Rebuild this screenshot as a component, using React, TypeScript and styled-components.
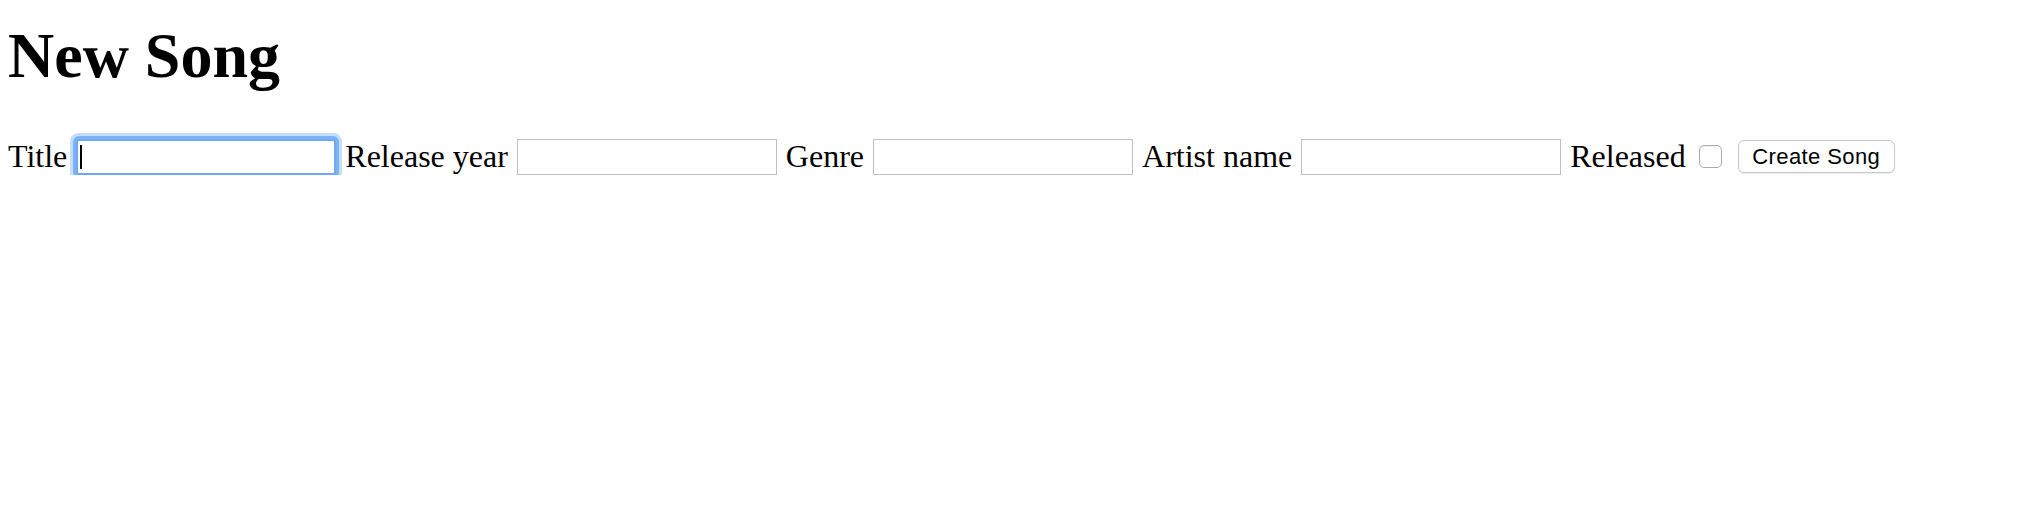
import styled, { createGlobalStyle } from "styled-components";

const GlobalStyle = createGlobalStyle`
  body {
    margin: 0;
    background: #fff;
    color: #000;
    font-family: "Liberation Serif", "Times New Roman", serif;
  }
`;

const fields = ["Title", "Release year", "Genre", "Artist name"];

function App() {
  return (
    <Page>
      <GlobalStyle />
      <Heading>New Song</Heading>
      <Form onSubmit={(e) => e.preventDefault()}>
        {fields.map((name, i) => (
          <Field key={name}>
            <Label htmlFor={`song-${i}`}>{name}</Label>
            <InputWrap>
              <TextInput id={`song-${i}`} type="text" $focused={i === 0} />
              {i === 0 && <Caret />}
            </InputWrap>
          </Field>
        ))}
        <Label htmlFor="song-released">Released</Label>
        <Checkbox id="song-released" type="checkbox" />
        <SubmitButton type="submit">Create Song</SubmitButton>
      </Form>
    </Page>
  );
}

export default App;

const Page = styled.div`
  padding: 19px 8px 0;
`;

const Heading = styled.h1`
  margin: 0 0 45px;
  font-size: 64px;
  font-weight: 700;
  line-height: normal;
`;

const Form = styled.form`
  display: flex;
  align-items: center;
  gap: 8px;
`;

const Field = styled.div`
  display: flex;
  align-items: center;
  gap: 8px;
`;

const Label = styled.label`
  font-size: 32px;
  line-height: normal;
  white-space: nowrap;
`;

const InputWrap = styled.div`
  position: relative;
  display: flex;
  margin: 0 1px;
`;

const TextInput = styled.input<{ $focused?: boolean }>`
  box-sizing: border-box;
  width: 260px;
  height: 36px;
  margin: 0;
  padding: 0 4px;
  background: #fff;
  border: 1px solid #c0c0c0;
  border-radius: 0;
  font-size: 26px;
  outline: none;

  ${({ $focused }) =>
    $focused &&
    `
    border: 2px solid #6fa8f5;
    border-radius: 3px;
    box-shadow: 0 0 0 3px #7db2f6, 0 0 0 6px #c6ddfb;
  `}
`;

const Caret = styled.span`
  position: absolute;
  left: 4px;
  top: 6px;
  width: 2px;
  height: 24px;
  background: #000;
`;

const Checkbox = styled.input`
  appearance: none;
  box-sizing: border-box;
  width: 23px;
  height: 23px;
  margin: 0 8px 0 5px;
  background: #fff;
  border: 1px solid #ababab;
  border-radius: 5px;
  box-shadow: inset 0 1px 1px rgba(0, 0, 0, 0.06);
`;

const SubmitButton = styled.button`
  box-sizing: border-box;
  width: 157px;
  height: 33px;
  padding: 0;
  background: #fff;
  border: 1px solid #c8c8c8;
  border-radius: 6px;
  box-shadow: 0 1px 1px rgba(0, 0, 0, 0.08);
  color: #000;
  font-family: "Liberation Sans", Arial, sans-serif;
  font-size: 22px;
  letter-spacing: 0.4px;
`;
